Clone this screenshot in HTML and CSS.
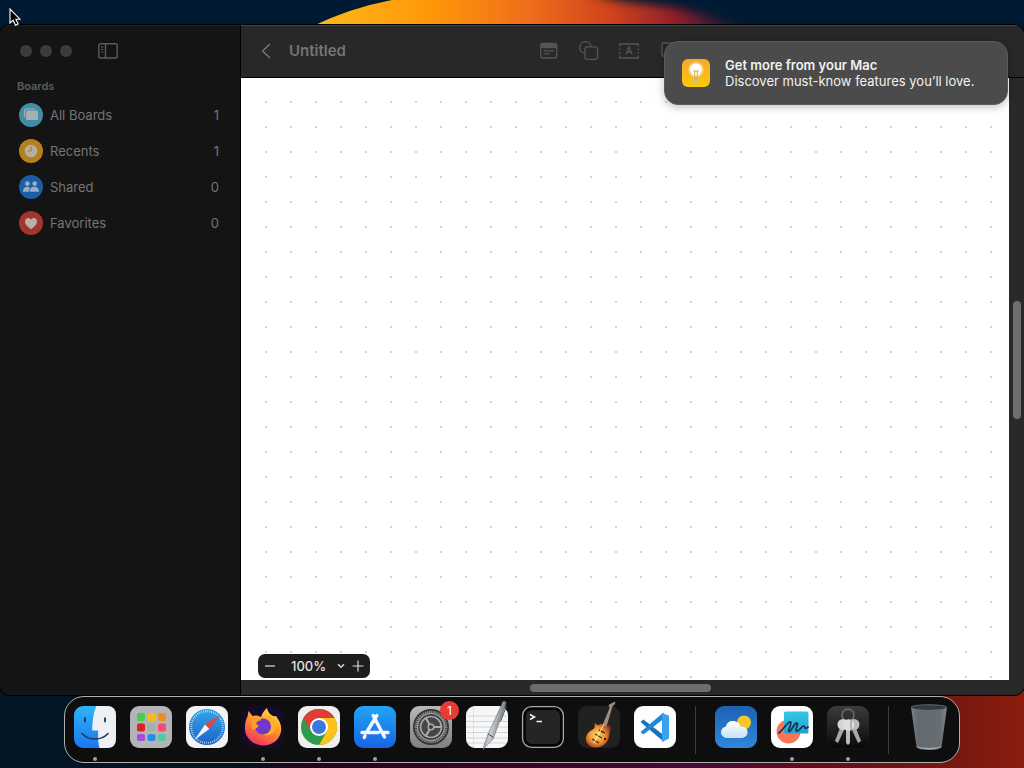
FILE: index.html
```html
<!DOCTYPE html>
<html lang="en">
<head>
    <meta charset="UTF-8">
    <title>Untitled</title>
    <meta name="viewport" content="width=device-width, initial-scale=1.0">
    <link rel="stylesheet" href="styles.css">
</head>
<body>

<!-- Wallpaper -->
<svg class="wallpaper" width="1024" height="30" viewBox="0 0 1024 30" aria-hidden="true">
    <defs>
        <linearGradient id="sun" gradientUnits="userSpaceOnUse" x1="315" y1="0" x2="750" y2="0">
            <stop offset="0" stop-color="#fdb71a"/>
            <stop offset=".25" stop-color="#ff9a08"/>
            <stop offset=".48" stop-color="#f0701a"/>
            <stop offset=".68" stop-color="#d0431c"/>
            <stop offset=".84" stop-color="#8a1d2c"/>
            <stop offset="1" stop-color="#001a33"/>
        </linearGradient>
        <filter id="soft" filterUnits="userSpaceOnUse" x="480" y="-60" width="700" height="140" color-interpolation-filters="sRGB"><feGaussianBlur stdDeviation="12 4"/></filter>
    </defs>
    <path d="M313 26 Q350 8 392 0 H750 V26Z" fill="url(#sun)"/>
    <path d="M570 -40 L610 0 L680 8 L750 30 V60 H1100 V-40Z" fill="#001a33" filter="url(#soft)"/>
</svg>

<main class="window">
    <aside class="sidebar">
        <div class="controls">
            <button class="light" aria-label="Close"></button>
            <button class="light" aria-label="Minimize"></button>
            <button class="light" aria-label="Zoom"></button>
            <button class="toggle" aria-label="Toggle sidebar">
                <svg width="20" height="16" viewBox="0 0 20 16" fill="none" stroke="#5c5c5c" stroke-width="1.4"><rect x=".8" y=".8" width="18.4" height="14.2" rx="1.5"/><path d="M7.5 1v14"/><path d="M3 4h2.5M3 6.5h2.5M3 9h2.5" stroke-width="1"/></svg>
            </button>
        </div>
        <h2>Boards</h2>
        <nav>
            <a href="#" class="item">
                <svg width="24" height="24" viewBox="0 0 24 24"><circle cx="12" cy="12" r="12" fill="#428da6"/><path d="M5.5 14V7.5q0-1.5 1.5-1.5h9" fill="none" stroke="#a3b1b5" stroke-width="1.2"/><rect x="7" y="7.5" width="12" height="9.5" rx="1.5" fill="#a3b1b5"/></svg>
                <span>All Boards</span><span class="count">1</span>
            </a>
            <a href="#" class="item">
                <svg width="24" height="24" viewBox="0 0 24 24"><circle cx="12" cy="12" r="12" fill="#b57f1d"/><circle cx="12" cy="12" r="6.3" fill="#b5b0a4"/><path d="M12 7.5V12H8.8" fill="none" stroke="#b57f1d" stroke-width="1.2"/></svg>
                <span>Recents</span><span class="count">1</span>
            </a>
            <a href="#" class="item">
                <svg width="24" height="24" viewBox="0 0 24 24"><circle cx="12" cy="12" r="12" fill="#1b5da6"/><g fill="#9caebf"><circle cx="8.4" cy="8.6" r="2.3"/><circle cx="15.7" cy="8.6" r="2.3"/><path d="M4 16.8c0-3.5 1.7-5 4.2-5 1.4 0 2.3.4 3 1.2-1 1-1.4 2.2-1.5 3.8zM10.7 16.8c0-3.5 2-5 4.7-5s4.6 1.5 4.6 5z"/></g></svg>
                <span>Shared</span><span class="count">0</span>
            </a>
            <a href="#" class="item">
                <svg width="24" height="24" viewBox="0 0 24 24"><circle cx="12" cy="12" r="12" fill="#a3352f"/><path d="M12 18.2C8.4 15.6 6 13.3 6 10.5 6 8.3 7.5 7 9.2 7c1.2 0 2.2.6 2.8 1.7C12.6 7.6 13.600 7 14.800 7 16.500 7 18 8.300 18 10.500c0 2.800-2.400 5.100-6 7.700z" fill="#b8b0ae"/></svg>
                <span>Favorites</span><span class="count">0</span>
            </a>
        </nav>
    </aside>

    <section class="board">
        <header class="toolbar">
            <div class="title">
                <button aria-label="Back"><svg width="10" height="16" viewBox="0 0 10 16" fill="none" stroke="#747474" stroke-width="1.6" stroke-linecap="round" stroke-linejoin="round"><path d="M8.5 1.5L1.500 8l7 6.500"/></svg></button>
                <h1>Untitled</h1>
            </div>
            <div class="tools">
                <button aria-label="Sticky note"><svg width="20" height="20" viewBox="0 0 20 20" fill="none" stroke="#555" stroke-width="1.3"><rect x="1.7" y="2.5" width="16" height="14.5" rx="2"/><path d="M2 3.5h15.500v3H2z" fill="#555"/><path d="M4.500 9.800h10.500M4.500 12.800h6.500"/></svg></button>
                <button aria-label="Shape"><svg width="20" height="20" viewBox="0 0 20 20" fill="none" stroke="#555" stroke-width="1.3"><path d="M5.500 12.200A5.800 5.800 0 1 1 12.200 5.200"/><rect x="6" y="5.800" width="12.500" height="12.500" rx="2"/></svg></button>
                <button aria-label="Text box"><svg width="20" height="20" viewBox="0 0 20 20" fill="none" stroke="#555" stroke-width="1.3"><path d="M.7 5.500V3h18.600v2.500M.7 14.500V17h18.600v-2.500M.7 7.500v1.800M.7 11v1.800M19.300 7.500v1.800M19.300 11v1.800M7 13.500l3-7.500 3 7.500M8 11h4"/></svg></button>
                <button aria-label="Media"><svg width="20" height="20" viewBox="0 0 20 20" fill="none" stroke="#555" stroke-width="1.3"><rect x="3" y="2" width="16" height="13" rx="1"/></svg></button>
                <button aria-label="Insert file"><svg width="20" height="20" viewBox="0 0 20 20" fill="none" stroke="#555" stroke-width="1.3"><rect x="4" y="2" width="12" height="16" rx="2"/></svg></button>
            </div>
        </header>
        <div class="canvas">
            <div class="zoom">
                <button aria-label="Zoom out"><svg width="12" height="12" viewBox="0 0 12 12" stroke="#d8d8d8" stroke-width="1.2"><path d="M1 6h10"/></svg></button>
                <label class="level">
                    <select aria-label="Zoom level"><option>100%</option></select>
                    <svg width="8" height="6" viewBox="0 0 8 6" fill="none" stroke="#d8d8d8" stroke-width="1.5"><path d="M1 1.200l3 3 3-3"/></svg>
                </label>
                <button aria-label="Zoom in"><svg width="12" height="12" viewBox="0 0 12 12" stroke="#d8d8d8" stroke-width="1.2"><path d="M.5 6h11M6 .5v11"/></svg></button>
            </div>
        </div>
        <div class="scroll-y"><div class="thumb"></div></div>
        <div class="scroll-x"><div class="thumb"></div></div>
    </section>
</main>

<div class="notification" role="alert">
    <svg width="28" height="28" viewBox="0 0 28 28">
        <defs>
            <linearGradient id="tip" x2="0" y2="1"><stop stop-color="#f7a62c"/><stop offset="1" stop-color="#fccb0a"/></linearGradient>
            <radialGradient id="glow"><stop offset=".5" stop-color="#fff6e0"/><stop offset="1" stop-color="#fff6e0" stop-opacity="0"/></radialGradient>
        </defs>
        <rect width="28" height="28" rx="6" fill="url(#tip)"/>
        <circle cx="14" cy="10.500" r="8.500" fill="url(#glow)"/>
        <path d="M14 4.500c-3.600 0-6 2.500-6 5.700 0 2.600 2 3.800 2.800 6.300h6.400c.8-2.500 2.800-3.700 2.800-6.300 0-3.200-2.400-5.700-6-5.700z" fill="#fff"/>
        <path d="M11.200 17.500h5.600l-.6 5-2.200 2.500-2.200-2.500z" fill="#cfc69c"/>
        <path d="M11 12h6M12.700 12v9M15.300 12v9" fill="none" stroke="#e9a63a" stroke-width="1"/>
    </svg>
    <div>
        <strong>Get more from your Mac</strong>
        <p>Discover must-know features you’ll love.</p>
    </div>
</div>

<nav class="dock">
    <button class="app running" aria-label="Finder"><svg viewBox="0 0 42 42">
        <defs><linearGradient id="finder" x2="0" y2="1"><stop stop-color="#2fb4f8"/><stop offset="1" stop-color="#1a78ee"/></linearGradient></defs>
        <rect width="42" height="42" rx="9" fill="url(#finder)"/>
        <path d="M22.500 0H33q9 0 9 9v24q0 9-9 9h-7.500c-1.200-5-1.500-9-1.400-17.500H18.200C18.500 14 19.600 6 22.500 0z" fill="#eef0f5"/>
        <path d="M11 12v3.500M31 12v3.500" stroke="#1c2b3a" stroke-width="1.700" stroke-linecap="round"/>
        <path d="M8 27.500c6.500 7.300 19.500 7.300 26 0" fill="none" stroke="#1d3a55" stroke-width="1.500" stroke-linecap="round"/></svg></button>

    <button class="app" aria-label="Launchpad"><svg viewBox="0 0 42 42">
        <rect width="42" height="42" rx="9" fill="#b4b3b5"/>
        <rect x="7" y="7" width="8" height="8" rx="2" fill="#45cf52"/><rect x="17.500" y="7" width="8" height="8" rx="2" fill="#f6b91f"/><rect x="28" y="7" width="8" height="8" rx="2" fill="#ee8d22"/>
        <rect x="7" y="17.500" width="8" height="8" rx="2" fill="#d8251f"/><rect x="17.500" y="17.500" width="8" height="8" rx="2" fill="#9fb0a6"/><rect x="28" y="17.500" width="8" height="8" rx="2" fill="#ee4f73"/>
        <rect x="7" y="28" width="8" height="7" rx="2" fill="#a44bdd"/><rect x="17.500" y="28" width="8" height="7" rx="2" fill="#258ee8"/><rect x="28" y="28" width="8" height="7" rx="2" fill="#48cfa0"/></svg></button>

    <button class="app" aria-label="Safari"><svg viewBox="0 0 42 42">
        <defs><linearGradient id="safari" x2="0" y2="1"><stop stop-color="#35a7e8"/><stop offset="1" stop-color="#1d62c8"/></linearGradient></defs>
        <rect width="42" height="42" rx="9" fill="#f2f3f5"/>
        <circle cx="21" cy="21" r="18" fill="url(#safari)"/>
        <circle cx="21" cy="21" r="15.800" fill="none" stroke="#d5e9fa" stroke-width="2" stroke-dasharray=".7 1.360"/>
        <path d="M34 9L19 18.500l4.300 4.600z" fill="#e8413f"/><path d="M8.500 34L19 18.500l4.300 4.600z" fill="#f3f3f3"/></svg></button>

    <button class="app running" aria-label="Firefox"><svg viewBox="0 0 42 42">
        <defs><linearGradient id="fox" x1=".8" x2=".3" y2="1"><stop stop-color="#ffe04a"/><stop offset=".45" stop-color="#ff9a28"/><stop offset="1" stop-color="#f02f62"/></linearGradient></defs>
        <rect width="42" height="42" rx="9" fill="#150b26"/>
        <path d="M25 2c.5 3 2 5.300 4.700 7.300 1.600 1 2.900 1 4.300.7 3.800 5 6 10 5 15.500C37.500 34 30 39.500 21 39.500S3.500 32.500 3 23.500c-.3-5 .5-9 2.500-13l1-5.500 4 5c3.200-1 6-.5 8.500 1C20 7.500 22 4.500 25 2z" fill="url(#fox)"/>
        <circle cx="21" cy="20.500" r="8" fill="#7239c8"/>
        <path d="M9 12c5-2 8-1 10.500 2-2.500.5-4 1-5 2.500-.7 1.500.5 3 2.500 3.200-3.500 3-4.500 4.800-7 3z" fill="#ff9b27"/>
        <path d="M20 12c5-1.500 9.500 2 9.500 8 0 5-4 8.500-8.500 8.500 6 2.500 12-2 13-8 .7-5-3-9-7-10.500z" fill="#ffaf30"/></svg></button>

    <button class="app running" aria-label="Chrome"><svg viewBox="0 0 42 42">
        <rect width="42" height="42" rx="9" fill="#f0efed"/>
        <circle cx="21" cy="21" r="18" fill="#319b4d"/>
        <path d="M21 12h15.600A18 18 0 0 1 21 39l8-14z" fill="#fbc31e"/>
        <path d="M5.400 12A18 18 0 0 1 36.600 12H21l-7.800 13.500z" fill="#e03e34"/>
        <circle cx="21" cy="21" r="9" fill="#fff"/><circle cx="21" cy="21" r="7" fill="#3b78e0"/></svg></button>

    <button class="app running" aria-label="App Store"><svg viewBox="0 0 42 42">
        <defs><linearGradient id="store" x2="0" y2="1"><stop stop-color="#22a5f6"/><stop offset="1" stop-color="#1864e4"/></linearGradient></defs>
        <rect width="42" height="42" rx="9" fill="url(#store)"/>
        <path d="M19.200 9.500L30.500 31M22.800 9.500L12.500 26.500M8 26.500h16.500M29.500 26.500H34M11 30l-.8 1.500" fill="none" stroke="#f3f8ff" stroke-width="3.400" stroke-linecap="round"/></svg></button>

    <button class="app" aria-label="System Settings"><svg viewBox="0 0 42 42">
        <defs><linearGradient id="gear" x2="0" y2="1"><stop stop-color="#b7b9b9"/><stop offset="1" stop-color="#7f8180"/></linearGradient></defs>
        <rect width="42" height="42" rx="9" fill="url(#gear)"/>
        <circle cx="21" cy="21" r="18" fill="#343636"/>
        <circle cx="21" cy="21" r="15.200" fill="none" stroke="#929493" stroke-width="2.200" stroke-dasharray="1.200 .9"/>
        <circle cx="21" cy="21" r="13.500" fill="none" stroke="#929493" stroke-width="1.600"/>
        <circle cx="21" cy="21" r="10.500" fill="#454746" stroke="#a4a6a5" stroke-width="1.700"/>
        <path d="M21 21h11M21 21l-5.500-9.500M21 21l-5.500 9.500" stroke="#a9abaa" stroke-width="2.200"/>
        <circle cx="21" cy="21" r="2.800" fill="#3b3d3c" stroke="#a9abaa" stroke-width="1.500"/></svg>
        <span class="badge">1</span></button>

    <button class="app" aria-label="TextEdit"><svg viewBox="0 0 42 42">
        <defs><linearGradient id="pen" x1="0" x2="1" y2=".4"><stop stop-color="#5b6268"/><stop offset=".5" stop-color="#c9ced2"/><stop offset="1" stop-color="#59616a"/></linearGradient></defs>
        <rect width="42" height="42" rx="9" fill="#f7f7f7"/>
        <path d="M1 10h40M0 15.500h42M0 21h42M0 26.500h42M0 32h42M2 37h38" stroke="#c9ccd1" stroke-width=".8"/><path d="M7.500 0v42" stroke="#e2d3d3" stroke-width=".8"/>
        <path d="M35.500-1l1-3 1.500-1 1.500.7.700 1.800-1 3L27 33l-8.500 9-1.500 2 .5-3L22 28z" fill="url(#pen)" stroke="#555c63" stroke-width=".5"/>
        <path d="M40.500 0l-6 15.500M22 28l5 3" fill="none" stroke="#454e57" stroke-width="1"/></svg></button>

    <button class="app" aria-label="Terminal"><svg viewBox="0 0 42 42">
        <rect x=".6" y=".6" width="40.800" height="40.800" rx="9" fill="#050505" stroke="#a8a8a8" stroke-width="1.300"/>
        <rect x="4" y="4" width="34" height="34" rx="6" fill="#242525"/>
        <path d="M8 8.500l4.500 2.500L8 13.500M14.500 15.500H20" fill="none" stroke="#f2f2f2" stroke-width="1.500"/></svg></button>

    <button class="app" aria-label="GarageBand"><svg viewBox="0 0 42 42">
        <defs><radialGradient id="body" cx=".45" cy=".5" r=".6"><stop stop-color="#ffdc62"/><stop offset=".55" stop-color="#ed9130"/><stop offset="1" stop-color="#8b2914"/></radialGradient></defs>
        <rect width="42" height="42" rx="9" fill="#222122"/>
        <path d="M25 19L32 2l-1-3 6-3-.5 2-2.500 2.500L28 21z" fill="#9c8777" stroke="#d2c0ad" stroke-width=".5"/>
        <path d="M17 17c-1 3 1 5-3 7-5 2-8 8-5 13 3 6 14 6 19 0 4-5 3-9 4-12s1-5-1-6c-2 1-3 2-4 1-2-1-3-3-5-2-1 2-3 1-5-1z" fill="url(#body)"/>
        <path d="M17 28l7 4M14 33l7 4M21 24l6 3" stroke="#4d2818" stroke-width="1.400"/><path d="M26 18L16 37" stroke="#fff0bd" stroke-width="1"/><circle cx="27" cy="33" r="1.200" fill="#3a1810"/></svg></button>

    <button class="app" aria-label="Visual Studio Code"><svg viewBox="0 0 42 42">
        <rect width="42" height="42" rx="9" fill="#fcfdfd"/>
        <path d="M6.500 16l2.800-2.500L29.500 29v6.500z" fill="#1673bd"/>
        <path d="M6.500 26l2.800 2.500L29.500 13V6.500z" fill="#1d88d4"/>
        <path d="M28 7l7 2.800V32.500L28 36z" fill="#39a2ed"/></svg></button>

    <span class="separator"></span>

    <button class="app" aria-label="Weather"><svg viewBox="0 0 42 42">
        <defs><linearGradient id="sky" x2="0" y2="1"><stop stop-color="#1c61b4"/><stop offset="1" stop-color="#3087d8"/></linearGradient>
        <linearGradient id="cloud" x2="0" y2="1"><stop stop-color="#fff"/><stop offset="1" stop-color="#c8e0f5"/></linearGradient></defs>
        <rect width="42" height="42" rx="9" fill="url(#sky)"/>
        <circle cx="29" cy="16.500" r="7" fill="#f8c52d"/>
        <path d="M13 32c-4 0-7-2.300-7-5.800 0-3 2-5.200 4.800-5.500C11.500 17 14.500 15 18 15c3.800 0 6.700 2.300 7.600 5.500 4-.4 7 2 7 5.500 0 3.600-2.600 6-6.500 6z" fill="url(#cloud)"/></svg></button>

    <button class="app running" aria-label="Freeform"><svg viewBox="0 0 42 42">
        <defs><linearGradient id="square" x2="0" y2="1"><stop stop-color="#35c7e7"/><stop offset="1" stop-color="#269fcf"/></linearGradient></defs>
        <rect width="42" height="42" rx="9" fill="#fff"/>
        <circle cx="17.500" cy="25.500" r="12" fill="#fa7457"/><rect x="13" y="5.500" width="24.500" height="22" rx="1.500" fill="url(#square)"/>
        <path d="M8 27c5-4 9-12 11.500-11 2 1.500-3.500 9-1.500 9.500 2.500.5 5-9 8-8.500 2 .5-2.500 7-.5 8 3 1 5.500-6 7.500-5 1.500.7-.5 4.500 4 1" fill="none" stroke="#12384f" stroke-width="1.800" stroke-linecap="round"/></svg></button>

    <button class="app running" aria-label="Keychain Access"><svg viewBox="0 0 42 42">
        <defs><linearGradient id="keys" x2="0" y2="1"><stop stop-color="#3c3c3d"/><stop offset="1" stop-color="#09090a"/></linearGradient></defs>
        <rect width="42" height="42" rx="9" fill="url(#keys)"/>
        <circle cx="21" cy="9" r="6" fill="none" stroke="#686b6d" stroke-width="1.600"/>
        <path d="M13 22l4 2-6 13-3-2zM25 24l4-2 5 13-3 2z" fill="#a5a7a8"/>
        <circle cx="16" cy="18.500" r="5.500" fill="#d2d5d6"/><circle cx="27" cy="18.500" r="5.500" fill="#b8bbbc"/>
        <path d="M19 22h4v15l-2 2-2-2z" fill="#b9bbbc"/><circle cx="21.500" cy="19" r="5.800" fill="#dcdede"/>
        <path d="M24 13v12" stroke="#85898b" stroke-width="1"/></svg></button>

    <span class="separator"></span>

    <button class="app" aria-label="Trash"><svg viewBox="0 0 42 42">
        <defs><linearGradient id="bin" x2="1" y2="0"><stop stop-color="#7b8286"/><stop offset=".2" stop-color="#626a6f"/><stop offset=".8" stop-color="#666e73"/><stop offset="1" stop-color="#81888c"/></linearGradient></defs>
        <path d="M3 1l5.500 40c.8 4 24.200 4 25 0L39 1z" fill="url(#bin)"/>
        <path d="M8.500 40c3 2.500 22 2.500 25 0-.5 4.500-24.500 4.500-25 0z" fill="#a4aaad"/>
        <ellipse cx="21" cy="1.500" rx="18" ry="2.800" fill="#343a3e" stroke="#6f767a" stroke-width=".8"/></svg></button>
</nav>

<svg class="cursor" width="14" height="20" viewBox="0 0 14 20" aria-hidden="true"><path d="M1 1v14l3.200-2.800 2.300 5 2.600-1.200-2.200-4.800h4z" fill="#000" stroke="#fff" stroke-width="1.100"/></svg>

</body>
</html>
```

FILE: styles.css
```css
* {
    box-sizing: border-box;
}
body {
    margin: 0;
    min-height: 100vh;
    padding: 25px 0 5px;
    display: flex;
    flex-direction: column;
    position: relative;
    overflow: hidden;
    font-family: Inter, "Liberation Sans", sans-serif;
    font-size: 13px;
    background: linear-gradient(90deg, #021727 0%, #04101f 24%, #26041a 30%, #380522 50%, #450b38 68%, #5e0b1d 78%, #781910 94%, #8c1d0e 100%) bottom / 100% 90px no-repeat #001a33;
}
h1, h2, p {
    margin: 0;
}
button {
    padding: 0;
    border: none;
    background: none;
    font-family: inherit;
}
svg {
    display: block;
    flex: none;
}
.wallpaper {
    position: absolute;
    top: 0;
    left: 0;
}

/* Window */
.window {
    flex: 1;
    display: flex;
    position: relative;
    min-height: 500px;
    margin-bottom: 1px;
    border-radius: 10px;
    overflow: hidden;
    box-shadow: 0 0 0 1px #000;
    background: #292929;
}
.sidebar {
    width: 241px;
    border-top: 1px solid #222;
    border-right: 1px solid #000;
    background: #141414;
}
.controls {
    display: flex;
    align-items: center;
    gap: 8px;
    height: 50px;
    padding-left: 20px;
}
.light {
    width: 12px;
    height: 12px;
    border-radius: 50%;
    background: #3c3c3c;
}
.toggle {
    margin-left: 18px;
}
.sidebar h2 {
    padding: 2px 17px 0;
    line-height: 16px;
    font-size: 11px;
    font-weight: 600;
    color: #5c5c5c;
}
.item {
    display: flex;
    align-items: center;
    gap: 7px;
    height: 36px;
    padding: 0 21px 0 19px;
    color: #747474;
    text-decoration: none;
}
nav .count {
    margin-left: auto;
}
.sidebar nav {
    padding-top: 3px;
}

/* Board */
.board {
    flex: 1;
    display: grid;
    grid-template-columns: 1fr 15px;
    grid-template-rows: 53px 1fr 15px;
}
.toolbar {
    grid-column: 1 / 3;
    display: grid;
    grid-template-columns: 1fr auto 1fr;
    align-items: center;
    padding: 0 27px 2px 20px;
    border-top: 1px solid #454545;
    border-bottom: 1px solid #000;
    background: #282828;
}
.title {
    display: flex;
    align-items: center;
    gap: 18px;
}
.title h1 {
    font-size: 15px;
    font-weight: 600;
    color: #747474;
}
.tools {
    display: flex;
    gap: 20px;
}
.canvas {
    position: relative;
    border-left: 2px solid #fff;
    background: radial-gradient(circle at 12px 12px, #bcbcbc 0, #dcdcdc 1px, transparent 1px) 11px 12px / 25px 25px #fff;
}
.zoom {
    position: absolute;
    left: 15px;
    bottom: 2px;
    display: flex;
    align-items: center;
    justify-content: space-between;
    width: 112px;
    height: 24px;
    padding: 0 6px;
    border-radius: 7px;
    background: #1e1e1e;
}
.level {
    display: flex;
    align-items: center;
    gap: 10px;
    padding-left: 8px;
}
.level select {
    appearance: none;
    padding: 0;
    border: none;
    background: none;
    font-family: inherit;
    font-size: 13px;
    font-weight: 500;
    color: #e2e2e2;
}
.scroll-y, .scroll-x {
    background: #292929;
}
.scroll-x {
    grid-column: 1 / 3;
    padding-top: 4px;
}
.scroll-y {
    padding-left: 4px;
}
.thumb {
    border-radius: 4px;
    background: #6d6d6d;
}
.scroll-y .thumb {
    width: 8px;
    height: 118px;
    margin-top: 223px;
}
.scroll-x .thumb {
    width: 181px;
    height: 8px;
    margin-left: 289px;
}

/* Notification */
.notification {
    position: absolute;
    top: 41px;
    right: 16px;
    display: flex;
    align-items: center;
    gap: 15px;
    width: 344px;
    height: 64px;
    padding: 0 17px 1px;
    border: 1px solid #5c5c5c;
    border-radius: 14px;
    background: #4b4b4b;
    box-shadow: 0 2px 8px rgba(0,0,0,0.25);
    line-height: 16px;
    color: #f2f2f2;
}
.notification strong {
    font-weight: 600;
}

/* Dock */
.dock {
    align-self: center;
    display: flex;
    gap: 14px;
    height: 67px;
    padding: 9px;
    position: relative;
    border: 1px solid #b0b0b0;
    border-radius: 20px;
    background: #0e0e0f;
}
.app {
    position: relative;
    width: 42px;
    height: 42px;
}
.app svg {
    width: 42px;
    height: 42px;
    overflow: visible;
}
.running::after {
    content: "";
    position: absolute;
    left: 19px;
    top: 51px;
    width: 4px;
    height: 4px;
    border-radius: 50%;
    background: #a0a0a0;
}
.badge {
    position: absolute;
    top: -5px;
    right: -7px;
    width: 19px;
    border-radius: 50%;
    background: #ea3a33;
    font-size: 12px;
    line-height: 19px;
    text-align: center;
    color: #fff;
}
.separator {
    width: 1px;
    height: 48px;
    margin: 0 5px;
    background: #3c3c3c;
}

.cursor {
    position: absolute;
    top: 8px;
    left: 9px;
}
```
